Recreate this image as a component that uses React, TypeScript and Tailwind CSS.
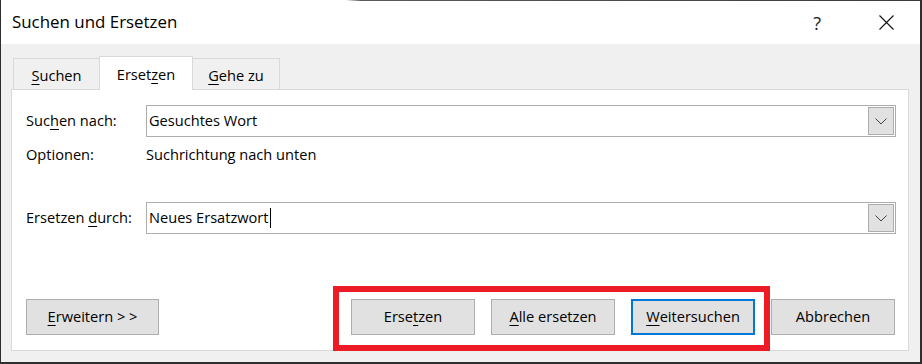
import React from "react";

const font = { fontFamily: '"Open Sans", "Noto Sans", sans-serif' };

function U({ children }: { children: React.ReactNode }) {
  return <span className="underline underline-offset-[3px] decoration-1">{children}</span>;
}

function Chevron() {
  return (
    <svg width="12" height="7" viewBox="0 0 12 7" className="block">
      <path d="M0.5 0.5 L6 6 L11.5 0.5" fill="none" stroke="#444" strokeWidth="1" />
    </svg>
  );
}

function Combo({ children }: { children: React.ReactNode }) {
  return (
    <div className="flex h-[32px] flex-1 items-stretch border border-[#adadad] bg-white p-px">
      <div className="flex flex-1 items-center pl-px text-[14.6px] text-black">{children}</div>
      <div className="flex w-[26px] items-center justify-center border border-[#adadad] bg-[#e1e1e1]">
        <Chevron />
      </div>
    </div>
  );
}

function Btn({ children, w, primary }: { children: React.ReactNode; w: string; primary?: boolean }) {
  return (
    <div
      className={`flex h-[36px] items-center justify-center bg-[#e1e1e1] text-[14.6px] text-black ${w} ${
        primary ? "border-2 border-[#0078d7]" : "border border-[#adadad]"
      }`}
    >
      {children}
    </div>
  );
}

export default function App() {
  return (
    <div style={font} className="relative h-[364px] w-[922px] overflow-hidden bg-white">
      <div className="flex h-full w-full flex-col border-b-2 border-l border-r-2 border-[#2e2e2e]">
        {/* title bar */}
        <div className="h-px w-full bg-[linear-gradient(to_right,#ffffff_0px,#ffffff_345px,#5a5a5a_360px,#3a3a3a_100%)]" />
        <div className="flex h-[43px] items-center bg-white pl-[11px] pr-[26px] text-black">
          <div className="flex-1 text-[16.9px] leading-none">Suchen und Ersetzen</div>
          <div className="mr-[58px] text-[18px] leading-none text-[#222]">?</div>
          <svg width="15" height="15" viewBox="0 0 15 15" className="block">
            <path d="M0.5 0.5 L14.5 14.5 M14.5 0.5 L0.5 14.5" stroke="#111" strokeWidth="1.1" />
          </svg>
        </div>

        {/* body */}
        <div className="flex flex-1 flex-col bg-[#f0f0f0] pl-[10px] pr-[11px] pt-[12px]">
          {/* tabs */}
          <div className="flex h-[33px] items-end pl-[2px] text-[14.6px] text-black">
            <div className="flex h-[31px] w-[86px] items-center justify-center border-l border-t border-[#d9d9d9] pt-[3px]">
              <span>
                <U>S</U>uchen
              </span>
            </div>
            <div className="relative z-10 -mb-px flex h-[34px] w-[94px] items-center justify-center border-l border-r border-t border-[#d9d9d9] bg-white pt-[2px]">
              <span>
                Erset<U>z</U>en
              </span>
            </div>
            <div className="flex h-[31px] w-[87px] items-center justify-center border-r border-t border-[#d9d9d9] pt-[3px]">
              <span>
                <U>G</U>ehe zu
              </span>
            </div>
          </div>

          {/* panel */}
          <div className="flex h-[262px] flex-col border border-[#d9d9d9] bg-white pl-[14px] pr-[12px] text-[14.6px] text-black">
            <div className="mt-[15px] flex items-center">
              <div className="w-[120px]">
                Suc<U>h</U>en nach:
              </div>
              <Combo>Gesuchtes Wort</Combo>
            </div>
            <div className="mt-[6px] flex h-[24px] items-center">
              <div className="w-[120px]">Optionen:</div>
              <div>Suchrichtung nach unten</div>
            </div>
            <div className="mt-[35px] flex items-center">
              <div className="w-[120px]">
                Ersetzen <U>d</U>urch:
              </div>
              <Combo>
                <span>Neues Ersatzwort</span>
                <span className="ml-px inline-block h-[20px] w-px bg-black" />
              </Combo>
            </div>
            <div className="mt-[65px] flex items-center pr-px">
              <Btn w="w-[133px]">
                <span>
                  <U>E</U>rweitern &gt; &gt;
                </span>
              </Btn>
              <div className="ml-auto flex gap-[16px]">
                <Btn w="w-[124px]">
                  <span>
                    Erse<U>t</U>zen
                  </span>
                </Btn>
                <Btn w="w-[124px]">
                  <span>
                    <U>A</U>lle ersetzen
                  </span>
                </Btn>
                <Btn w="w-[124px]" primary>
                  <span>
                    <U>W</U>eitersuchen
                  </span>
                </Btn>
                <Btn w="w-[124px]">
                  <span>Abbrechen</span>
                </Btn>
              </div>
            </div>
          </div>
        </div>
      </div>

      {/* red annotation rectangle */}
      <div className="pointer-events-none absolute left-[333px] top-[286px] h-[65px] w-[437px] border-[6px] border-[#ed1c24]" />
    </div>
  );
}
